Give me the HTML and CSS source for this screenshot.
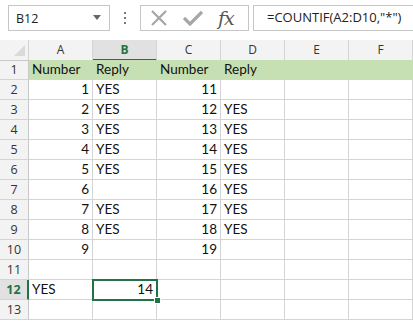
FILE: index.html
```html
<!DOCTYPE html>
<html lang="en">
<head>
    <meta charset="UTF-8">
    <title>COUNTIF</title>
    <link rel="stylesheet" href="styles.css">
</head>
<body>
    <div class="toolbar">
        <div class="namebox">
            <span>B12</span>
            <svg class="caret" width="8" height="5" viewBox="0 0 8 5"><path d="M0 0H8L4 5Z" fill="#666"/></svg>
        </div>
        <div class="dots">
            <svg width="4" height="12" viewBox="0 0 4 12"><rect x="1" y="0" width="2" height="2" fill="#7a7a7a"/><rect x="1" y="5" width="2" height="2" fill="#7a7a7a"/><rect x="1" y="10" width="2" height="2" fill="#7a7a7a"/></svg>
        </div>
        <div class="fxbox">
            <svg width="18" height="16" viewBox="0 0 18 16"><path d="M2 1L16 15M16 1L2 15" stroke="#a6a6a6" stroke-width="2.2" fill="none"/></svg>
            <svg width="20" height="16" viewBox="0 0 20 16"><path d="M1 8L7 14L19 2" stroke="#a6a6a6" stroke-width="3.2" fill="none"/></svg>
            <span class="fx">fx</span>
        </div>
        <div class="formula">=COUNTIF(A2:D10,"*")</div>
    </div>

    <div class="sheet">
        <div class="row head">
            <div class="corner"></div>
            <div class="col">A</div>
            <div class="col active">B</div>
            <div class="col">C</div>
            <div class="col">D</div>
            <div class="col">E</div>
            <div class="col">F</div>
        </div>
        <div class="row green">
            <div class="rh">1</div>
            <div class="c">Number</div><div class="c">Reply</div><div class="c">Number</div><div class="c">Reply</div><div class="c"></div><div class="c"></div>
        </div>
        <div class="row">
            <div class="rh">2</div>
            <div class="c n">1</div><div class="c">YES</div><div class="c n">11</div><div class="c"></div><div class="c"></div><div class="c"></div>
        </div>
        <div class="row">
            <div class="rh">3</div>
            <div class="c n">2</div><div class="c">YES</div><div class="c n">12</div><div class="c">YES</div><div class="c"></div><div class="c"></div>
        </div>
        <div class="row">
            <div class="rh">4</div>
            <div class="c n">3</div><div class="c">YES</div><div class="c n">13</div><div class="c">YES</div><div class="c"></div><div class="c"></div>
        </div>
        <div class="row">
            <div class="rh">5</div>
            <div class="c n">4</div><div class="c">YES</div><div class="c n">14</div><div class="c">YES</div><div class="c"></div><div class="c"></div>
        </div>
        <div class="row">
            <div class="rh">6</div>
            <div class="c n">5</div><div class="c">YES</div><div class="c n">15</div><div class="c">YES</div><div class="c"></div><div class="c"></div>
        </div>
        <div class="row">
            <div class="rh">7</div>
            <div class="c n">6</div><div class="c"></div><div class="c n">16</div><div class="c">YES</div><div class="c"></div><div class="c"></div>
        </div>
        <div class="row">
            <div class="rh">8</div>
            <div class="c n">7</div><div class="c">YES</div><div class="c n">17</div><div class="c">YES</div><div class="c"></div><div class="c"></div>
        </div>
        <div class="row">
            <div class="rh">9</div>
            <div class="c n">8</div><div class="c">YES</div><div class="c n">18</div><div class="c">YES</div><div class="c"></div><div class="c"></div>
        </div>
        <div class="row">
            <div class="rh">10</div>
            <div class="c n">9</div><div class="c"></div><div class="c n">19</div><div class="c"></div><div class="c"></div><div class="c"></div>
        </div>
        <div class="row">
            <div class="rh">11</div>
            <div class="c"></div><div class="c"></div><div class="c"></div><div class="c"></div><div class="c"></div><div class="c"></div>
        </div>
        <div class="row">
            <div class="rh active">12</div>
            <div class="c">YES</div><div class="c n sel">14</div><div class="c"></div><div class="c"></div><div class="c"></div><div class="c"></div>
        </div>
        <div class="row">
            <div class="rh">13</div>
            <div class="c"></div><div class="c"></div><div class="c"></div><div class="c"></div><div class="c"></div><div class="c"></div>
        </div>
    </div>
</body>
</html>
```

FILE: styles.css
```css
body {
    margin: 0;
    background: #ffffff;
    font-family: "Open Sans", "Noto Sans", sans-serif;
    color: #222;
    overflow: hidden;
}
.toolbar {
    height: 40px;
    box-sizing: border-box;
    padding-top: 5px;
    display: flex;
    align-items: flex-start;
}
.namebox {
    margin-left: 8px;
    width: 102px;
    height: 26px;
    box-sizing: border-box;
    border: 1px solid #c6c6c6;
    display: flex;
    align-items: center;
    justify-content: space-between;
    padding: 0 8px 0 7px;
    font-size: 12.5px;
    color: #222;
}
.caret {
    margin-top: -2px;
}
.dots {
    width: 30px;
    height: 26px;
    display: flex;
    align-items: center;
    justify-content: center;
}
.fxbox {
    width: 109px;
    height: 26px;
    box-sizing: border-box;
    border: 1px solid #c6c6c6;
    display: flex;
    align-items: center;
    padding-left: 9px;
    gap: 15px;
}
.fx {
    font-family: "DejaVu Serif", serif;
    font-style: italic;
    font-size: 19px;
    line-height: 24px;
    color: #555;
    letter-spacing: -1px;
}
.formula {
    margin-left: 4px;
    flex: 1;
    height: 26px;
    box-sizing: border-box;
    border: 1px solid #c6c6c6;
    border-right: none;
    padding-left: 13px;
    line-height: 23px;
    font-size: 13px;
    color: #222;
}
.sheet {
    display: flex;
    flex-direction: column;
}
.row {
    display: grid;
    grid-template-columns: 29px repeat(6, 64px);
    height: 20px;
}
.row > div {
    box-sizing: border-box;
    border-right: 1px solid #d4d4d4;
    border-bottom: 1px solid #d4d4d4;
}
.corner {
    background: #f3f3f3;
    position: relative;
    border-bottom-color: #c8c8c8 !important;
}
.corner::after {
    content: "";
    position: absolute;
    right: 3px;
    bottom: 4px;
    border-style: solid;
    border-width: 0 0 11px 11px;
    border-color: transparent transparent #dadada transparent;
}
.col {
    background: #f3f3f3;
    text-align: center;
    font-size: 12px;
    line-height: 19px;
    color: #333;
    border-bottom-color: #c8c8c8 !important;
}
.col.active {
    background: #e1e1e1;
    color: #217346;
    font-weight: bold;
    border-bottom: 2px solid #217346 !important;
}
.rh {
    background: #f3f3f3;
    text-align: center;
    font-size: 12.5px;
    line-height: 19px;
    color: #333;
    border-right-color: #c8c8c8 !important;
}
.rh.active {
    background: #e1e1e1;
    color: #217346;
    font-weight: bold;
    border-right: 2px solid #217346 !important;
}
.c {
    font-family: "Lato", sans-serif;
    font-size: 13.5px;
    line-height: 19px;
    padding: 0 3px;
    color: #111;
    white-space: nowrap;
}
.c.n {
    text-align: right;
}
.green .c {
    background: #c6e0b4;
    border-right-color: #c6e0b4;
}
.sel {
    position: relative;
}
.sel::after {
    content: "";
    position: absolute;
    left: -1px;
    top: -1px;
    width: 66px;
    height: 22px;
    box-sizing: border-box;
    border: 2px solid #217346;
}
.sel::before {
    content: "";
    position: absolute;
    left: 61px;
    top: 17px;
    width: 5px;
    height: 5px;
    background: #217346;
    border: 1px solid #fff;
    z-index: 1;
}
```
